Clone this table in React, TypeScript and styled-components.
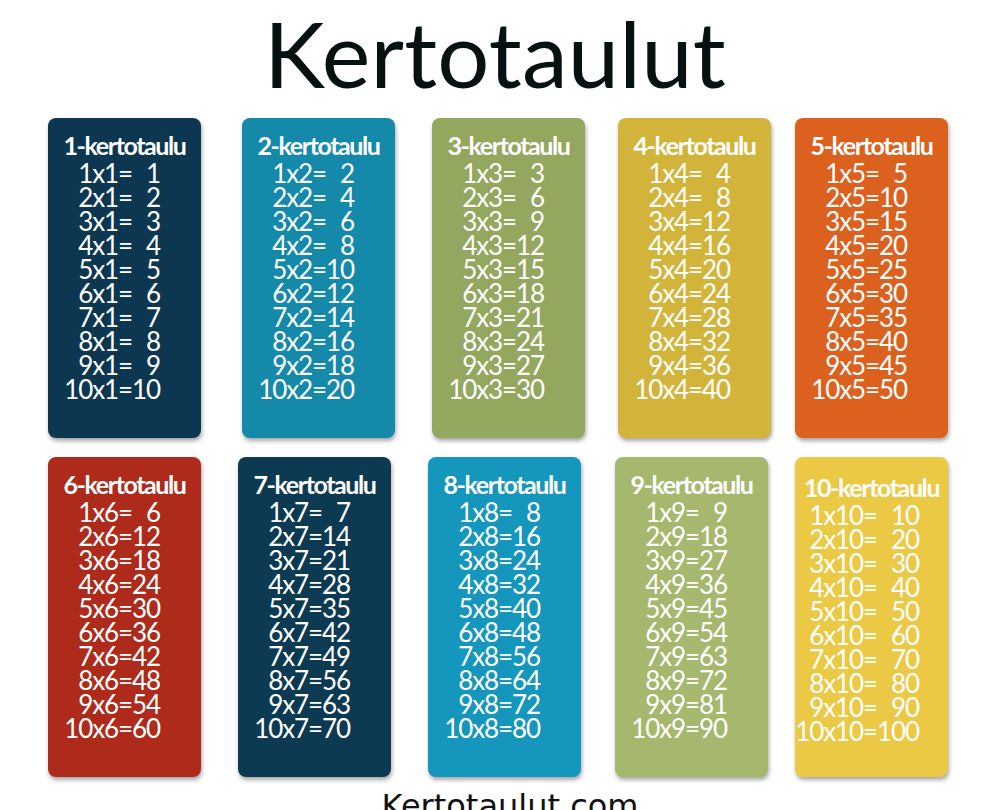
import React from 'react';
import styled, { createGlobalStyle } from 'styled-components';

type Table = {
  n: number;
  color: string;
  offset: number;
  textRight?: number;
  top?: number;
};

const rowOne: Table[] = [
  { n: 1, color: '#0d3650', offset: 48 },
  { n: 2, color: '#1489aa', offset: 41 },
  { n: 3, color: '#94a75f', offset: 37 },
  { n: 4, color: '#d3b43b', offset: 33 },
  { n: 5, color: '#dc611e', offset: 24 },
];

const rowTwo: Table[] = [
  { n: 6, color: '#ae2a1a', offset: 48 },
  { n: 7, color: '#0d3a53', offset: 37 },
  { n: 8, color: '#1596bd', offset: 37 },
  { n: 9, color: '#a5b86d', offset: 34 },
  { n: 10, color: '#ebc945', offset: 27, textRight: 29, top: 3 },
];

const App = () => {
  const renderLine = (i: number, n: number) => {
    const product = i * n;
    const padded = n === 10 ? product < 100 : product < 10;
    return (
      <Line key={i}>
        {i}x{n}={padded && <Gap />}
        {product}
      </Line>
    );
  };

  const renderCard = (t: Table) => (
    <Card key={t.n} $color={t.color} $offset={t.offset} $top={t.top || 0}>
      <CardTitle>{t.n}-kertotaulu</CardTitle>
      <Lines $right={t.textRight || 41}>
        {Array.from({ length: 10 }, (_, k) => renderLine(k + 1, t.n))}
      </Lines>
    </Card>
  );

  return (
    <>
      <GlobalStyle />
      <Page>
        <Title>Kertotaulut</Title>
        <Row>{rowOne.map(renderCard)}</Row>
        <Row>{rowTwo.map(renderCard)}</Row>
        <Footer>Kertotaulut.com</Footer>
      </Page>
    </>
  );
};

const GlobalStyle = createGlobalStyle`
  html, body {
    margin: 0;
    padding: 0;
    background: #fff;
  }
`;

const Page = styled.div`
  width: 990px;
  height: 810px;
  overflow: hidden;
  display: flex;
  flex-direction: column;
  font-family: Lato, "Open Sans", sans-serif;

  & > * {
    flex-shrink: 0;
  }
`;

const Title = styled.h1`
  margin: 0;
  height: 118px;
  font-family: Lato, "Open Sans", sans-serif;
  font-size: 92px;
  font-weight: 400;
  line-height: 106px;
  letter-spacing: 0.2px;
  text-align: center;
  color: #061112;
`;

const Row = styled.div`
  display: flex;
  margin-bottom: 19px;
`;

const Card = styled.div<{ $color: string; $offset: number; $top: number }>`
  display: flex;
  flex-direction: column;
  align-items: center;
  box-sizing: border-box;
  margin-left: ${p => p.$offset}px;
  padding-top: ${p => 12 + p.$top}px;
  width: 153px;
  height: 320px;
  border-radius: 8px;
  background-color: ${p => p.$color};
  box-shadow: 1px 3px 4px rgba(0, 0, 0, 0.35);
  color: #fff;
`;

const CardTitle = styled.div`
  font-size: 25px;
  font-weight: 700;
  letter-spacing: -1.4px;
  line-height: 30px;
  white-space: nowrap;
`;

const Lines = styled.div<{ $right: number }>`
  display: flex;
  flex-direction: column;
  align-items: flex-end;
  align-self: flex-end;
  margin-top: 1px;
  padding-right: ${p => p.$right}px;
`;

const Line = styled.div`
  display: flex;
  font-size: 26px;
  line-height: 24px;
  letter-spacing: -1.1px;
  white-space: nowrap;
`;

const Gap = styled.span`
  display: inline-block;
  width: 14px;
`;

const Footer = styled.div`
  margin-top: -2px;
  padding-left: 30px;
  font-family: "DejaVu Sans", sans-serif;
  font-size: 32px;
  line-height: 24px;
  text-align: center;
  color: #111;
`;

export default App;
